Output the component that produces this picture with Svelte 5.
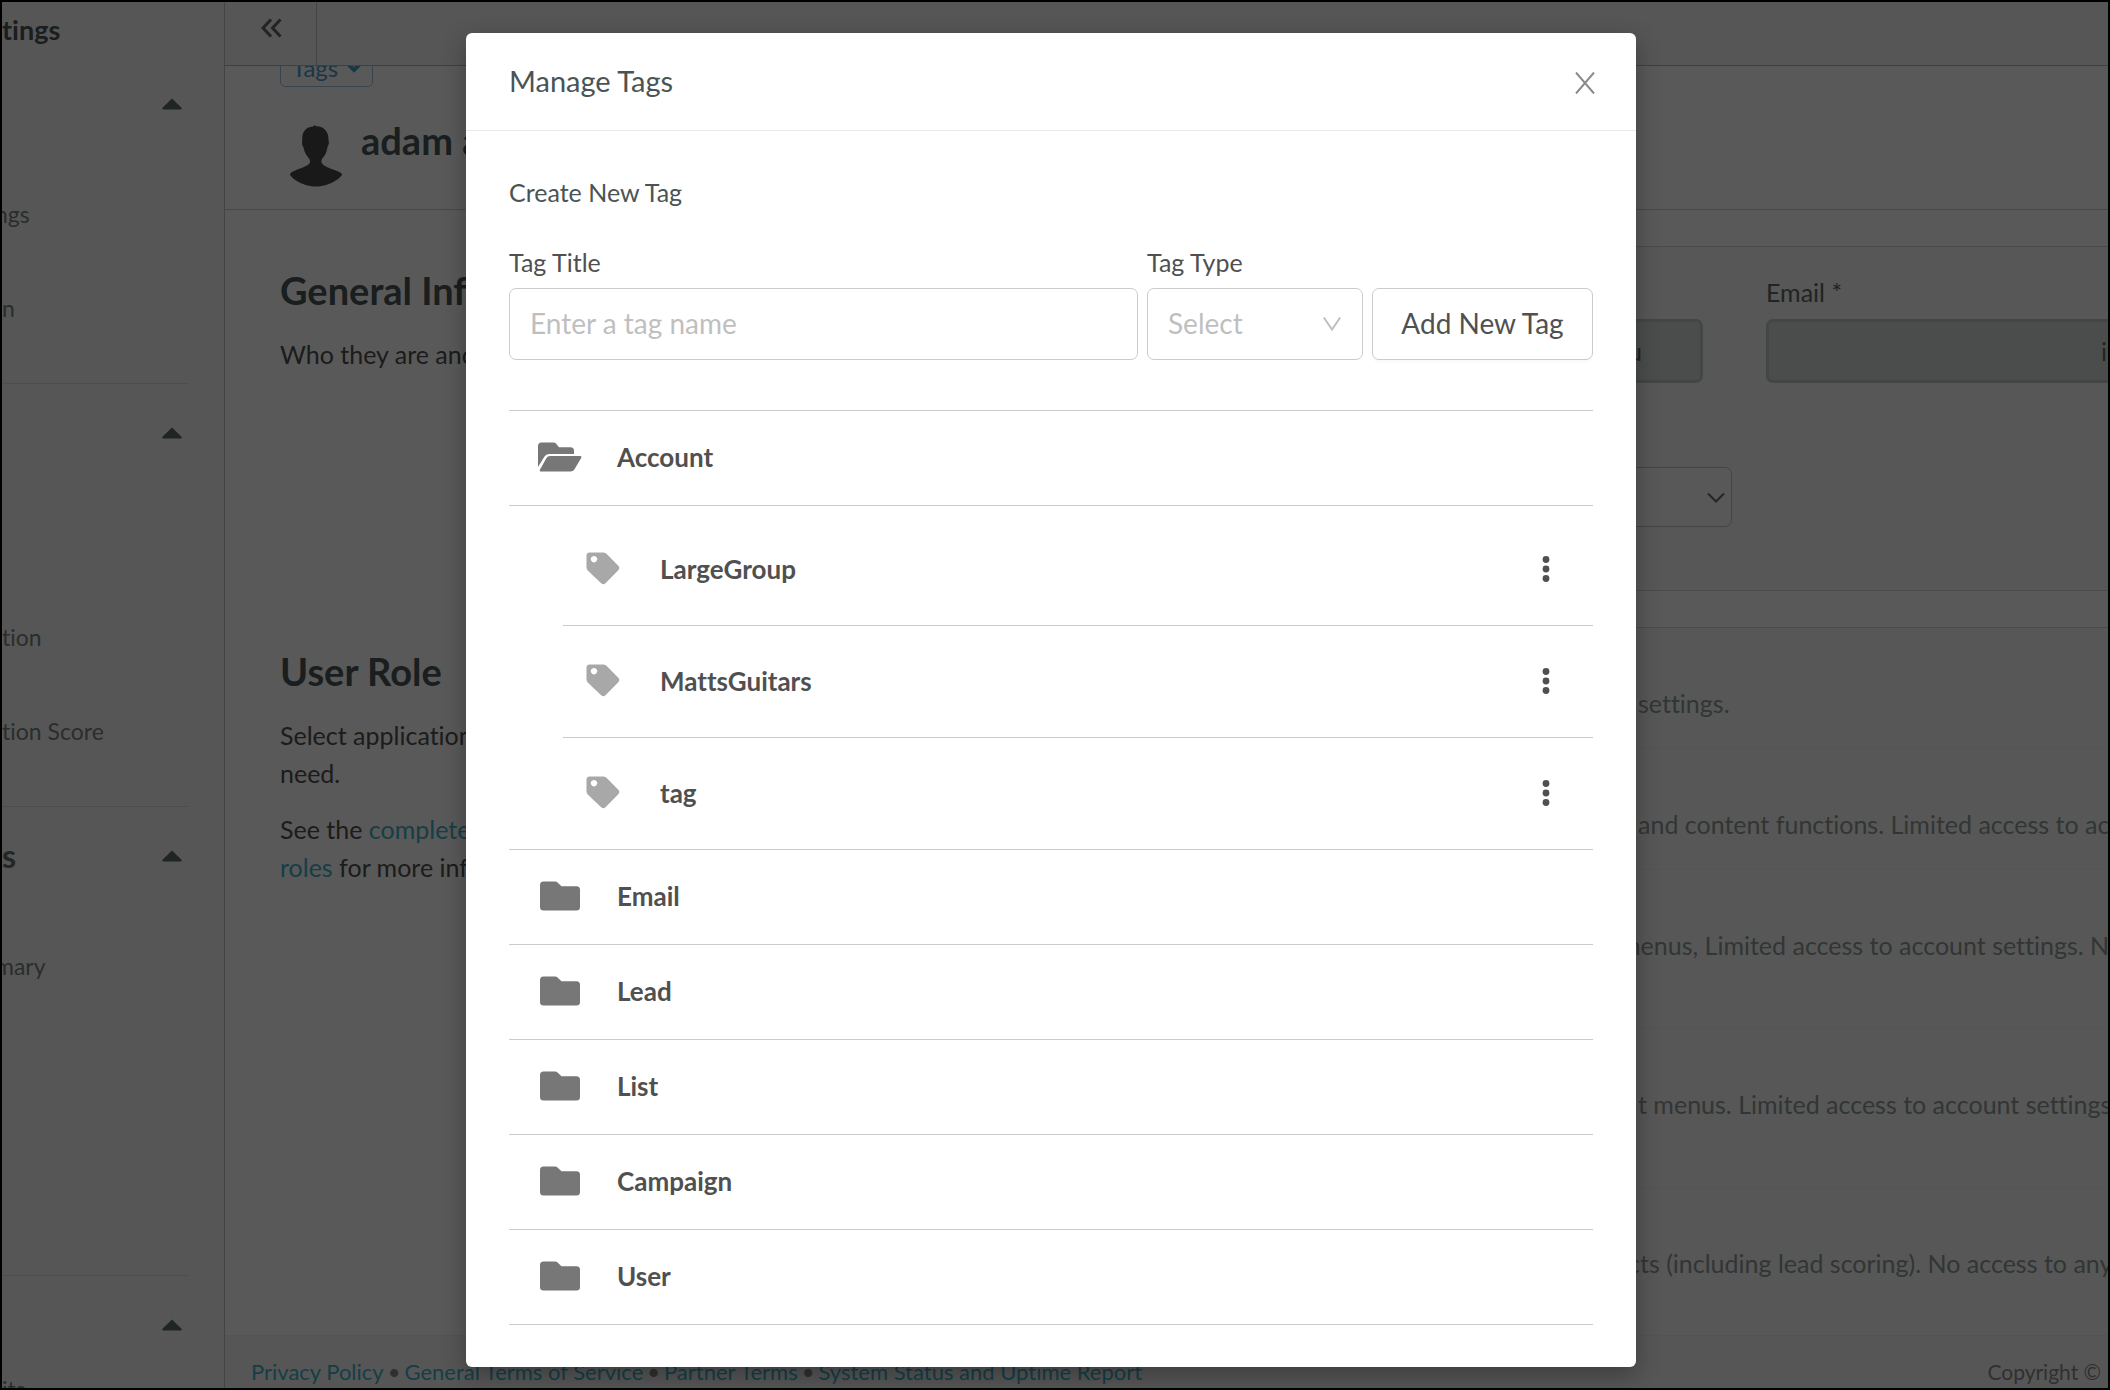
<script lang="ts">
  type Folder = { name: string; open: boolean; tags: string[] };

  let folders: Folder[] = $state([
    { name: "Account", open: true, tags: ["LargeGroup", "MattsGuitars", "tag"] },
    { name: "Email", open: false, tags: [] },
    { name: "Lead", open: false, tags: [] },
    { name: "List", open: false, tags: [] },
    { name: "Campaign", open: false, tags: [] },
    { name: "User", open: false, tags: [] },
  ]);

  let title = $state("");
  let type = $state("");
  let visible = $state(true);

  const groups = [
    { head: "", items: ["ngs", "n"] },
    { head: "", items: ["", "tion", "tion Score"] },
    { head: "s", items: ["mary", "", ""], tall: true },
    { head: "", items: ["its"], tight: true },
  ];
  const clipped = ["ngs", "mary"];

  const roles = [
    { text: "settings." },
    { text: "and content functions. Limited access to acc" },
    { text: "menus, Limited access to account settings. No", tall: true, tuck: "wide" },
    { text: "t menus. Limited access to account settings.", tall: true },
    { text: "cts (including lead scoring). No access to any", tall: true, tuck: "narrow" },
  ];

  const links = [
    "Privacy Policy",
    "General Terms of Service",
    "Partner Terms",
    "System Status and Uptime Report",
  ];

  function addTag() {
    const folder = folders.find((f) => f.name === type);
    if (!folder || !title) return;
    folder.tags.push(title);
    folder.open = true;
    title = "";
  }
</script>

<div class="frame">
  <aside class="sidebar">
    <h2>tings</h2>
    {#each groups as group}
      <section class="group" class:tall={group.tall} class:tight={group.tight}>
        <div class="group-head">
          <strong>{group.head}</strong>
          <svg width="20" height="12" viewBox="0 0 20 12">
            <path d="M10 0.5 19.3 9.6Q20.6 11.5 18.6 11.5H1.4Q-.6 11.5.7 9.6Z" />
          </svg>
        </div>
        <ul>
          {#each group.items as item}
            <li class:clipped={clipped.includes(item)}>{item}</li>
          {/each}
        </ul>
      </section>
    {/each}
  </aside>

  <div class="main">
    <header class="topbar">
      <button class="collapse" aria-label="Collapse menu">
        <svg width="22" height="20" viewBox="0 0 22 20">
          <path d="M10 1.500 2 10l8 8.500M19.500 1.500 11.500 10l8 8.500" />
        </svg>
      </button>
    </header>

    <div class="profile">
      <button class="tags-button">
        Tags
        <svg width="14" height="10" viewBox="0 0 14 10"><path d="M1.500 1.500 7 7l5.500-5.500" /></svg>
      </button>
      <div class="person">
        <svg width="54" height="62" viewBox="0 0 54 62">
          <path
            d="M24 1.500 26 0l1 1.200C35 1 40 7 39.500 15c.8 2 .3 5-1 7-1 6-3 9-5.500 12-1.500 3 0 5 3 7 6 3.500 17 5.500 17 8.500 0 2-11 12-26 12S1 51.500 1 49.500C1 46 13 43.500 18 40.500c3-2 4-4 2-7-2.500-3-4.500-6-5.500-11-1.500-2-2-5-1.200-7C12.500 8 16 2 24 1.500Z"
          />
        </svg>
        <h1>adam a</h1>
      </div>
    </div>

    <div class="content">
      <section class="row general">
        <div class="intro">
          <h2>General Inf</h2>
          <p>Who they are and</p>
        </div>
        <div class="card">
          <div class="fields">
            <input class="name" value="u" aria-label="Name" readonly />
            <div class="email">
              <label for="email">Email *</label>
              <input id="email" value="in" readonly />
            </div>
          </div>
          <div class="zone">
            <select aria-label="Time zone"></select>
            <svg width="18" height="11" viewBox="0 0 18 11"><path d="M1 1.500 9 9.500l8-8" /></svg>
          </div>
        </div>
      </section>

      <section class="row">
        <div class="intro">
          <h2>User Role</h2>
          <p>Select application<br />need.</p>
          <p>See the <a href="#roles">complete</a><br /><a href="#roles">roles</a> for more inf</p>
        </div>
        <ul class="card roles">
          {#each roles as role}
            <li class:tall={role.tall}><span class={role.tuck}>{role.text}</span></li>
          {/each}
        </ul>
      </section>
    </div>

    <footer>
      <nav>
        {#each links as link, i}
          {#if i > 0}<span>•</span>{/if}
          <a href="#footer">{link}</a>
        {/each}
      </nav>
      <span>Copyright ©</span>
    </footer>
  </div>

  {#if visible}
    <div class="overlay">
      <div class="modal" role="dialog" aria-labelledby="modal-title">
        <header>
          <h3 id="modal-title">Manage Tags</h3>
          <button class="close" aria-label="Close" onclick={() => (visible = false)}>
            <svg width="20" height="22" viewBox="0 0 20 22"><path d="M1 .5 19 21.500M19 .5 1 21.500" /></svg>
          </button>
        </header>

        <div class="body">
          <h4>Create New Tag</h4>
          <div class="form">
            <div class="field grow">
              <label for="tag-title">Tag Title</label>
              <input id="tag-title" placeholder="Enter a tag name" bind:value={title} />
            </div>
            <div class="field type">
              <label for="tag-type">Tag Type</label>
              <div class="select">
                <select id="tag-type" bind:value={type}>
                  <option value="" disabled>Select</option>
                  {#each folders as folder}
                    <option>{folder.name}</option>
                  {/each}
                </select>
                <svg width="18" height="14" viewBox="0 0 18 14"><path d="M.8.5 9 12.500 17.200.5" /></svg>
              </div>
            </div>
            <button class="add" onclick={addTag}>Add New Tag</button>
          </div>

          <ul class="folders">
            {#each folders as folder}
              <li>
                <button class="folder" onclick={() => (folder.open = !folder.open)}>
                  <span class="icon">
                    {#if folder.open}
                      <svg width="44" height="30" viewBox="0 0 44 30">
                        <path d="M0 25V4Q0 .5 3.500.5H15.500Q17 .5 18 1.600L21 5.200H32.500Q36 5.200 36 8.700V12H11.500Q8 12 6.200 15Z" />
                        <path d="M12 14H42Q44.300 14 43 16.200L36.500 27.300Q35.200 29.500 32.500 29.500H3Q1 29.500 2.200 27.300L8.300 16.300Q9.500 14 12 14Z" />
                      </svg>
                    {:else}
                      <svg width="40" height="30" viewBox="0 0 40 30">
                        <path d="M0 4Q0 .5 3.500.5H15Q16.700.5 17.800 1.700L21.500 5.300H36.500Q40 5.300 40 8.800V26Q40 29.500 36.500 29.500H3.500Q0 29.500 0 26Z" />
                      </svg>
                    {/if}
                  </span>
                  {folder.name}
                </button>
                {#if folder.open && folder.tags.length}
                  <ul class="tags">
                    {#each folder.tags as tag}
                      <li>
                        <svg class="tag-icon" width="34" height="33" viewBox="0 0 34 33">
                          <path
                            fill-rule="evenodd"
                            d="M.5 3.500Q.5.5 3.500.5H17Q19 .5 20.500 1.800L32.300 13.800Q34.300 16 32.300 18.200L19.500 31.300Q17.300 33.300 15.200 31.300L2 18.800Q.5 17.400.5 15.300ZM8 4a3.200 3.200 0 1 0 .01 0Z"
                          />
                        </svg>
                        <span>{tag}</span>
                        <button class="more" aria-label="More">
                          <svg width="8" height="26" viewBox="0 0 8 26">
                            <circle cx="4" cy="3.500" r="3.400" />
                            <circle cx="4" cy="13" r="3.400" />
                            <circle cx="4" cy="22.500" r="3.400" />
                          </svg>
                        </button>
                      </li>
                    {/each}
                  </ul>
                {/if}
              </li>
            {/each}
          </ul>
        </div>
      </div>
    </div>
  {/if}
</div>

<style>
  .frame {
    position: relative;
    display: flex;
    height: 100vh;
    box-sizing: border-box;
    border: 2px solid #000;
    overflow: hidden;
    background: #fff;
    color: #505050;
    font-family: Lato, "Open Sans", sans-serif;
    font-size: 25px;
    font-variant-ligatures: none;
    line-height: 38px;
  }

  h1,
  h2,
  h3,
  h4,
  p,
  ul {
    margin: 0;
    padding: 0;
    list-style: none;
  }

  button,
  input,
  select {
    box-sizing: border-box;
    margin: 0;
    padding: 0;
    border: none;
    background: none;
    color: inherit;
    font: inherit;
    appearance: none;
  }

  button {
    cursor: pointer;
  }

  svg {
    flex: none;
    fill: none;
    stroke: currentColor;
  }

  a {
    color: #40b2ca;
    text-decoration: none;
  }

  /* sidebar */
  .sidebar {
    flex: none;
    width: 222px;
    overflow: hidden;
    border-right: 1px solid #c4c4c4;
    background: #f7f7f7;
    color: #78827f;
    font-size: 23px;
  }

  .sidebar h2 {
    height: 53px;
    color: #4a5757;
    font-size: 27px;
    line-height: 56px;
  }

  .group {
    margin-right: 36px;
    padding-bottom: 28px;
    border-bottom: 1px solid #dcdcdc;
  }

  .group.tall {
    padding-bottom: 74px;
  }

  .group-head {
    display: flex;
    align-items: center;
    justify-content: space-between;
    height: 98px;
    padding-right: 6px;
    color: #626e6b;
    font-size: 32px;
  }

  .group-head svg {
    fill: #5a6b69;
    stroke: none;
  }

  .group ul {
    padding-top: 14px;
  }

  .group li {
    height: 94px;
    line-height: 94px;
    white-space: nowrap;
  }

  .group li.clipped {
    margin-left: -7px;
  }

  .group.tight ul {
    padding-top: 0;
  }

  .group.tight li {
    height: 30px;
    line-height: 30px;
  }

  /* page */
  .main {
    flex: 1;
    display: flex;
    flex-direction: column;
    min-width: 0;
  }

  .topbar {
    flex: none;
    display: flex;
    height: 63px;
    border-bottom: 1px solid #b8b8b8;
    background: #f7f7f7;
  }

  .collapse {
    width: 92px;
    padding: 0 0 18px 2px;
    border-right: 1px solid #c4c4c4;
    color: #646464;
  }

  .collapse svg {
    stroke-width: 3;
    vertical-align: middle;
  }

  .profile {
    flex: none;
    height: 143px;
    padding-left: 55px;
    overflow: hidden;
    border-bottom: 1px solid #cdcdcd;
  }

  .tags-button {
    display: flex;
    align-items: center;
    gap: 9px;
    width: 93px;
    height: 42px;
    margin-top: -21px;
    padding: 4px 0 0 11px;
    border: 1px solid #a5c4de;
    border-radius: 5px;
    color: #4c9dc4;
    font-size: 24px;
  }

  .tags-button svg {
    stroke-width: 4;
  }

  .person {
    display: flex;
    gap: 18px;
    padding: 38px 0 0 9px;
  }

  .person svg {
    fill: #484848;
    stroke: none;
  }

  h1,
  .intro h2 {
    color: #4a5757;
    font-size: 38px;
    line-height: 38px;
  }

  h1 {
    line-height: 30px;
  }

  .content {
    flex: 1;
    min-height: 0;
    padding: 36px 0 0 55px;
    overflow: hidden;
  }

  .row {
    display: grid;
    grid-template-columns: 460px 1fr;
    margin-bottom: 36px;
  }

  .intro {
    padding-top: 25px;
  }

  .intro h2 {
    margin-bottom: 26px;
  }

  .intro p {
    margin-bottom: 18px;
  }

  .card {
    border: 1px solid #d8d8d8;
    border-right: none;
    background: #f9f9f9;
  }

  .general .card {
    height: 343px;
  }

  .fields {
    display: flex;
    align-items: flex-end;
    justify-content: flex-end;
    gap: 63px;
    padding-top: 26px;
    color: #5e6866;
  }

  .fields label {
    display: block;
    margin-bottom: 8px;
  }

  .fields input {
    display: block;
    height: 64px;
    border: 3px solid #c4c8c6;
    border-radius: 7px;
    background: #d6dcd9;
    color: #5e6866;
    text-align: right;
  }

  .fields .name {
    width: 300px;
    padding-right: 58px;
  }

  .email {
    width: 342px;
  }

  .email input {
    width: 362px;
    padding-right: 4px;
  }

  .zone {
    position: relative;
    width: 420px;
    margin: 84px 376px 0 auto;
    color: #5e6e6b;
  }

  .zone select {
    display: block;
    width: 100%;
    height: 60px;
    border: 1px solid #c4c4c4;
    border-radius: 7px;
    background: #fdfdfd;
  }

  .zone svg {
    position: absolute;
    top: 25px;
    right: 7px;
    stroke-width: 2;
  }

  .roles {
    color: #8e9a97;
    white-space: nowrap;
  }

  .roles li {
    height: 64px;
    padding-top: 56px;
    border-bottom: 1px solid #efefef;
  }

  .roles li.tall {
    height: 102px;
  }

  .roles span {
    display: block;
    width: 470px;
    margin-left: auto;
  }

  .roles .wide {
    text-indent: -18px;
  }

  .roles .narrow {
    text-indent: -10px;
  }

  footer {
    flex: none;
    display: flex;
    justify-content: space-between;
    height: 53px;
    padding: 0 7px 0 26px;
    background: #f7f7f7;
    border-top: 1px solid #eee;
    box-sizing: border-box;
    color: #8a8a8a;
    font-size: 21px;
    line-height: 72px;
    white-space: nowrap;
  }

  nav {
    display: flex;
    gap: 4px;
    font-size: 22px;
  }

  /* modal */
  .overlay {
    position: absolute;
    inset: 0;
    display: flex;
    align-items: flex-start;
    justify-content: center;
    padding: 31px 8px 0 0;
    background: rgba(0, 0, 0, 0.65);
  }

  .modal {
    width: 1170px;
    border-radius: 6px;
    background: #fff;
    box-shadow: 0 8px 24px rgba(0, 0, 0, 0.3);
  }

  .modal header {
    display: flex;
    align-items: center;
    justify-content: space-between;
    height: 97px;
    padding: 0 41px 0 43px;
    border-bottom: 1px solid #e8e8e8;
  }

  h3 {
    padding-bottom: 2px;
    color: #4a5454;
    font-size: 29px;
    font-weight: 400;
  }

  .close {
    display: flex;
    padding-top: 2px;
    color: #8a8a8a;
  }

  .close svg {
    stroke-width: 2;
  }

  .body {
    padding: 42px 43px;
  }

  h4 {
    margin-bottom: 32px;
    color: #4a5454;
    font-size: 25px;
    font-weight: 400;
  }

  .form {
    display: flex;
    align-items: flex-end;
    gap: 9px;
    margin-bottom: 50px;
  }

  .field label {
    display: block;
    margin-bottom: 7px;
  }

  .grow {
    flex: 1;
  }

  .type {
    width: 216px;
  }

  .field input,
  .field select,
  .add {
    display: block;
    width: 100%;
    height: 72px;
    padding: 0 20px 2px;
    border: 1px solid #cbcbcb;
    border-radius: 7px;
    background: #fff;
    font-size: 28px;
  }

  .field input::placeholder {
    color: #bfbfbf;
    opacity: 1;
  }

  .field select {
    color: #bfbfbf;
  }

  .select {
    position: relative;
  }

  .select svg {
    position: absolute;
    top: 29px;
    right: 22px;
    color: #bfbfbf;
    stroke-width: 2;
    pointer-events: none;
  }

  .add {
    width: 221px;
    box-shadow: 0 3px 2px rgba(0, 0, 0, 0.02);
  }

  .folders {
    border-top: 1px solid #cbcbcb;
    font-size: 26px;
    font-weight: 700;
  }

  .folder {
    display: flex;
    align-items: center;
    width: 100%;
    height: 95px;
    padding: 0 0 2px 20px;
    border-bottom: 1px solid #cbcbcb;
    text-align: left;
  }

  .icon {
    display: flex;
    justify-content: center;
    width: 62px;
    margin-right: 26px;
  }

  .icon svg {
    fill: #777;
    stroke: none;
  }

  .tags {
    padding-top: 8px;
    border-bottom: 1px solid #cbcbcb;
  }

  .tags li {
    display: flex;
    align-items: center;
    gap: 40px;
    height: 109px;
    margin-left: 54px;
    padding: 0 43px 2px 23px;
  }

  .tags li + li {
    border-top: 1px solid #cbcbcb;
  }

  .tag-icon {
    fill: #a8a8a8;
    stroke: none;
  }

  .more {
    display: flex;
    margin-left: auto;
  }

  .more svg {
    fill: #505050;
    stroke: none;
  }
</style>
